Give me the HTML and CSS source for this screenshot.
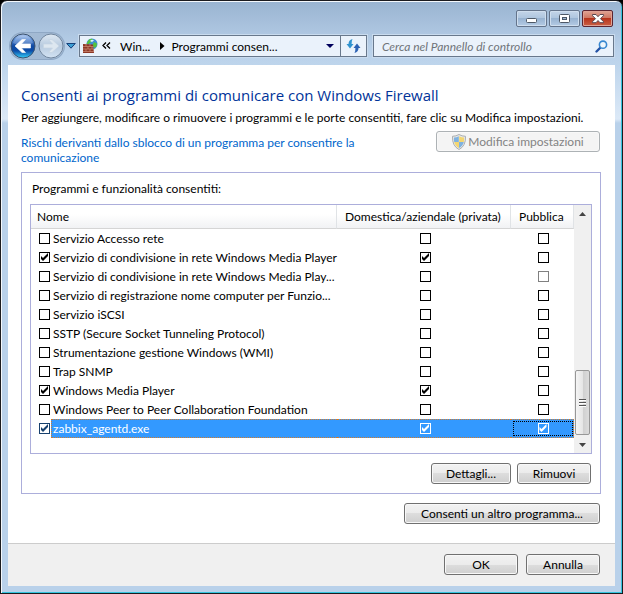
FILE: index.html
```html
<!DOCTYPE html>
<html lang="it">
<head>
<meta charset="utf-8">
<title>Programmi consentiti</title>
<link rel="stylesheet" href="styles.css">
</head>
<body>
<div class="window">
  <header class="titlebar">
    <button class="caption-btn" type="button" aria-label="Riduci a icona">
      <svg width="29" height="15" viewBox="0 0 29 15"><rect x="9.5" y="7.5" width="10" height="4" rx="1" fill="#fff" stroke="#4d5866"/></svg>
    </button>
    <button class="caption-btn" type="button" aria-label="Ingrandisci">
      <svg width="29" height="15" viewBox="0 0 29 15"><rect x="9.500" y="3.500" width="10" height="8" rx="1" fill="#fff" stroke="#4d5866"/><rect x="12.500" y="6.500" width="4" height="2" fill="#9fb8d3" stroke="#4d5866"/></svg>
    </button>
    <button class="caption-btn close" type="button" aria-label="Chiudi">
      <svg width="29" height="15" viewBox="0 0 29 15"><path d="M9.500 3.500h3.500l2 2.200 2-2.200h3.500v1.200l-3 3 3 3v1h-3.500l-2-2.200-2 2.200H9.500v-1l3-3-3-3z" fill="#fff" stroke="#58474f"/></svg>
    </button>
  </header>
  <nav class="navbar">
    <div class="history">
      <button class="plain" type="button" aria-label="Indietro">
        <svg width="26" height="26" viewBox="0 0 26 26">
          <defs>
            <linearGradient id="back" x1="0" y1="0" x2="0" y2="1"><stop offset="0" stop-color="#b5cdf0"/><stop offset=".25" stop-color="#4d82cf"/><stop offset=".5" stop-color="#124aa2"/><stop offset=".7" stop-color="#0b4ca8"/><stop offset="1" stop-color="#35d0fa"/></linearGradient>
            <linearGradient id="forward" x1="0" y1="0" x2="0" y2="1"><stop offset="0" stop-color="#dfe9f3"/><stop offset=".5" stop-color="#b7cadf"/><stop offset="1" stop-color="#d3e3f3"/></linearGradient>
          </defs>
          <circle cx="13" cy="13" r="12" fill="url(#back)" stroke="#3b526f"/>
          <path d="M3 10a10.500 10.500 0 0 1 20 0q-10 5-20 0z" fill="#fff" opacity=".22"/>
          <path d="M5 13l7-6.500h3.500L11.500 11H20.500v4H11.500l4 4.500H12z" fill="#fff" stroke="#fff" stroke-width=".6" stroke-linejoin="round"/>
        </svg>
      </button>
      <button class="plain" type="button" aria-label="Avanti">
        <svg width="26" height="26" viewBox="0 0 26 26">
          <circle cx="13" cy="13" r="12" fill="url(#forward)" stroke="#71869e"/>
          <path d="M21 13l-7-6.500h-3.500L14.500 11H5.500v4h9l-4 4.500H14z" fill="#dde7f0" stroke="#c5d4e3" stroke-width=".7"/>
        </svg>
      </button>
    </div>
    <button class="plain recent" type="button" aria-label="Pagine recenti">
      <svg width="10" height="6" viewBox="0 0 10 6"><path d="M.7.500h8.600L5 5.200z" fill="#3c9fd5" stroke="#17417a"/></svg>
    </button>
    <div class="address">
      <svg class="wall" width="16" height="16" viewBox="0 0 16 16">
        <circle cx="10" cy="6" r="5.500" fill="#3f8fd6"/>
        <path d="M7 1.500q3-1.500 4 .5l-2 2-3 2.500-1.500-1zM12 4l3 1.500-.5 3L12 10l-1.500-2.500z" fill="#55c33f"/>
        <path d="M8 3q2-2 4-.5l-2 1.500z" fill="#d9f3ff"/>
        <path d="M1 6l10 .5 1 8.500H1z" fill="#8e3826"/>
        <path d="M1 8.500h10.500M1 11h11M1 13.500h11M4 6v2.500M8 6v2.500M6 8.500V11M10 8.500V11M4 11v2.500M8 11v2.500" stroke="#cf8d77" stroke-width=".7"/>
      </svg>
      <svg class="chev" width="9" height="8" viewBox="0 0 9 8"><path d="M4 .5L1 3.500l3 3M8 .5L5 3.500l3 3" fill="none" stroke="#000" stroke-width="1.300"/></svg>
      <a class="crumb first" href="#">Win...</a>
      <svg width="5" height="8" viewBox="0 0 5 8"><path d="M0 0l4.500 4L0 8z"/></svg>
      <a class="crumb" href="#">Programmi consen...</a>
      <button class="plain drop" type="button" aria-label="Percorsi precedenti">
        <svg width="8" height="4" viewBox="0 0 8 4"><path d="M0 0h8L4 4z" fill="#00005c"/></svg>
      </button>
      <button class="plain refresh" type="button" aria-label="Aggiorna">
        <svg width="15" height="14" viewBox="0 0 15 14"><path d="M6.500 0Q2.500 1 2.500 5H.5L4 9.500 7.500 5H5.600Q5.500 2 6.500 0z" fill="#2f93cf"/><path d="M8.500 14Q12.500 13 12.500 9h2L11 4.500 7.500 9h1.900Q9.500 12 8.500 14z" fill="#2c62b4"/></svg>
      </button>
    </div>
    <div class="search">
      <input type="text" aria-label="Cerca" placeholder="Cerca nel Pannello di controllo">
      <svg width="13" height="13" viewBox="0 0 13 13"><path d="M5 8L1.500 11.500" stroke="#2453a5" stroke-width="2.400" stroke-linecap="round"/><circle cx="8" cy="4.700" r="3.600" fill="#eef6fc" stroke="#3787d0" stroke-width="1.600"/></svg>
    </div>
  </nav>
  <main class="content">
    <h1>Consenti ai programmi di comunicare con Windows Firewall</h1>
    <p class="intro">Per aggiungere, modificare o rimuovere i programmi e le porte consentiti, fare clic su Modifica impostazioni.</p>
    <div class="risk-row">
      <a class="risk" href="#">Rischi derivanti dallo sblocco di un programma per consentire la comunicazione</a>
      <button class="btn modify" type="button" disabled>
        <svg width="14" height="16" viewBox="0 0 14 16"><path d="M7 .5q3 1.800 6.500 1.800Q14 12 7 15.500 0 12 .5 2.300 4 2.300 7 .5z" fill="#e9e9e7" stroke="#a9adb0"/><path d="M6.800 2.200V8H2.200Q1.800 5.500 2 3.600q2.500 0 4.800-1.400zM7 8h4.800Q10.800 12 7 14z" fill="#7fb2e0"/><path d="M7.200 2.200V8h4.600q.4-2.500.2-4.400-2.500 0-4.800-1.400zM7 8H2.200Q3.200 12 7 14z" fill="#f3d671"/></svg>
        Modifica impostazioni
      </button>
    </div>
    <section class="panel">
      <h2>Programmi e funzionalità consentiti:</h2>
      <div class="list">
        <table>
          <colgroup><col><col class="col-private"><col class="col-public"></colgroup>
          <thead><tr><th>Nome</th><th>Domestica/aziendale (privata)</th><th>Pubblica</th></tr></thead>
          <tbody>
            <tr><td><div class="name"><input type="checkbox" id="p1"><label for="p1">Servizio Accesso rete</label></div></td><td><input type="checkbox" aria-label="Privata"></td><td><input type="checkbox" aria-label="Pubblica"></td></tr>
            <tr><td><div class="name"><input type="checkbox" id="p2" checked><label for="p2">Servizio di condivisione in rete Windows Media Player</label></div></td><td><input type="checkbox" aria-label="Privata" checked></td><td><input type="checkbox" aria-label="Pubblica"></td></tr>
            <tr><td><div class="name"><input type="checkbox" id="p3"><label for="p3">Servizio di condivisione in rete Windows Media Play...</label></div></td><td><input type="checkbox" aria-label="Privata"></td><td><input type="checkbox" aria-label="Pubblica" disabled></td></tr>
            <tr><td><div class="name"><input type="checkbox" id="p4"><label for="p4">Servizio di registrazione nome computer per Funzio...</label></div></td><td><input type="checkbox" aria-label="Privata"></td><td><input type="checkbox" aria-label="Pubblica"></td></tr>
            <tr><td><div class="name"><input type="checkbox" id="p5"><label for="p5">Servizio iSCSI</label></div></td><td><input type="checkbox" aria-label="Privata"></td><td><input type="checkbox" aria-label="Pubblica"></td></tr>
            <tr><td><div class="name"><input type="checkbox" id="p6"><label for="p6">SSTP (Secure Socket Tunneling Protocol)</label></div></td><td><input type="checkbox" aria-label="Privata"></td><td><input type="checkbox" aria-label="Pubblica"></td></tr>
            <tr><td><div class="name"><input type="checkbox" id="p7"><label for="p7">Strumentazione gestione Windows (WMI)</label></div></td><td><input type="checkbox" aria-label="Privata"></td><td><input type="checkbox" aria-label="Pubblica"></td></tr>
            <tr><td><div class="name"><input type="checkbox" id="p8"><label for="p8">Trap SNMP</label></div></td><td><input type="checkbox" aria-label="Privata"></td><td><input type="checkbox" aria-label="Pubblica"></td></tr>
            <tr><td><div class="name"><input type="checkbox" id="p9" checked><label for="p9">Windows Media Player</label></div></td><td><input type="checkbox" aria-label="Privata" checked></td><td><input type="checkbox" aria-label="Pubblica"></td></tr>
            <tr><td><div class="name"><input type="checkbox" id="p10"><label for="p10">Windows Peer to Peer Collaboration Foundation</label></div></td><td><input type="checkbox" aria-label="Privata"></td><td><input type="checkbox" aria-label="Pubblica"></td></tr>
            <tr class="selected"><td><div class="name"><input type="checkbox" id="p11" checked><label for="p11">zabbix_agentd.exe</label></div></td><td><input type="checkbox" aria-label="Privata" checked></td><td><div class="focus"><input type="checkbox" aria-label="Pubblica" checked></div></td></tr>
          </tbody>
        </table>
        <div class="scrollbar">
          <button class="plain arrow" type="button" aria-label="Scorri su"><svg width="7" height="4" viewBox="0 0 7 4"><path d="M0 4h7L3.500 0z" fill="#444"/></svg></button>
          <div class="track"><div class="thumb"><svg width="7" height="8" viewBox="0 0 7 8"><path d="M0 .5h7M0 3.500h7M0 6.500h7" stroke="#555"/><path d="M0 1.500h7M0 4.500h7M0 7.500h7" stroke="#fff"/></svg></div></div>
          <button class="plain arrow" type="button" aria-label="Scorri giù"><svg width="7" height="4" viewBox="0 0 7 4"><path d="M0 0h7L3.500 4z" fill="#444"/></svg></button>
        </div>
      </div>
      <div class="actions">
        <button class="btn details" type="button">Dettagli...</button>
        <button class="btn" type="button">Rimuovi</button>
      </div>
    </section>
    <div class="other"><button class="btn allow" type="button">Consenti un altro programma...</button></div>
    <footer class="footer">
      <button class="btn" type="button">OK</button>
      <button class="btn" type="button">Annulla</button>
    </footer>
  </main>
</div>
</body>
</html>
```
FILE: styles.css
```css
* { box-sizing: border-box; }

body {
  margin: 0;
  background: #000;
  color: #000;
  font: 12px/15px Lato, "Open Sans", sans-serif;
}

button, input { font: inherit; margin: 0; }
svg { display: block; flex: none; }
a { color: inherit; text-decoration: none; }

.window {
  display: flex;
  flex-direction: column;
  min-height: 100vh;
  padding: 0 6px 7px;
  border: 1px solid #1b1b1f;
  border-radius: 7px 7px 0 0;
  box-shadow: inset 1px 1px #f4f8fc, inset -1px -1px #35c4de;
  background: linear-gradient(#99b4d1, #a6bfdb 20px, #b9d1ea 50px, #bed5ec 64px, #dce9f7 118px, #b9d1ea 122px);
}

.titlebar {
  display: flex;
  justify-content: flex-end;
  gap: 2px;
  padding: 9px 3px 0 0;
}

.caption-btn {
  width: 31px;
  height: 17px;
  padding: 0;
  border: 1px solid #64748b;
  border-radius: 2px;
  background: linear-gradient(#c4d5e8, #afc6df 45%, #98b3d1 50%, #b4cbe4);
  box-shadow: inset 0 0 0 1px #cfdeee;
}
.close {
  border-color: #5c2531;
  background: linear-gradient(#e1a494, #cf7864 45%, #b7341c 50%, #cb6044);
  box-shadow: inset 0 0 0 1px #dfa294;
}

.navbar {
  display: flex;
  align-items: center;
  height: 38px;
  padding: 0 2px 0 3px;
}
.plain {
  display: flex;
  align-items: center;
  justify-content: center;
  padding: 0;
  border: 0;
  background: none;
}
.history {
  display: flex;
  gap: 2px;
  border-radius: 14px;
  background: #a3bad4;
  box-shadow: 0 0 0 1px #8fa8c5;
}
.recent { width: 14px; height: 20px; }

.address, .search {
  display: flex;
  align-items: center;
  height: 22px;
  border: 1px solid #68788c;
  background: #eaf2fb;
  box-shadow: 0 0 0 1px #c9dbee;
}
.address { flex: 284 1 0; margin-left: 1px; padding-left: 2px; }
.chev { margin-left: 4px; }
.crumb { margin: 0 9px 0 6px; white-space: nowrap; }
.crumb.first { margin: 0 10px 0 9px; }
.drop { width: 20px; height: 20px; margin-left: auto; }
.refresh { width: 26px; height: 20px; border-left: 1px solid #68788c; }
.search { flex: 226 1 0; margin-left: 6px; padding: 0 5px 0 8px; }
.search input {
  flex: 1;
  min-width: 0;
  padding: 0;
  border: 0;
  outline: 0;
  background: none;
  font-style: italic;
}
.search input::placeholder { color: #6f7479; opacity: 1; }

.content {
  flex: 1;
  display: flex;
  flex-direction: column;
  margin: 0 1px;
  background: #fff;
}
h1 {
  margin: 19px 13px 0;
  color: #003399;
  font: 15px/22px "Open Sans", sans-serif;
  white-space: nowrap;
}
.intro { margin: 4px 13px 0; white-space: nowrap; }
.risk-row {
  display: flex;
  justify-content: space-between;
  margin: 6px 15px 0 13px;
}
.risk { width: 360px; padding-top: 4px; color: #0066cc; }

.btn {
  display: flex;
  align-items: center;
  justify-content: center;
  gap: 2px;
  width: 74px;
  height: 21px;
  padding: 0;
  border: 1px solid #707070;
  border-radius: 3px;
  background: linear-gradient(#f2f2f2, #ebebeb 50%, #dddddd 50%, #cfcfcf);
  box-shadow: inset 0 0 0 1px #f8f8f8;
  color: #000;
  white-space: nowrap;
}
.modify {
  width: 164px;
  border-color: #adb2b5;
  background: #f4f4f4;
  color: #838383;
}
.details { width: 80px; }
.allow { width: 196px; }

.panel {
  margin: 7px 14px 0 13px;
  padding: 8px 8px 9px;
  border: 1px solid #acaedb;
}
h2 {
  margin: 0 2px 8px;
  font-size: 12px;
  line-height: 15px;
  font-weight: 400;
}
.list {
  display: flex;
  height: 250px;
  border: 1px solid #acaedb;
}
table {
  flex: 1;
  width: 100%;
  min-width: 0;
  height: min-content;
  table-layout: fixed;
  border-collapse: separate;
  border-spacing: 0;
}
.col-private { width: 174px; }
.col-public { width: 63px; }
th {
  height: 24px;
  padding: 0 0 0 8px;
  border-right: 1px solid #e0e3e6;
  border-bottom: 1px solid #d5d5d5;
  background: linear-gradient(#fff 40%, #f1f2f4);
  font-weight: 400;
  text-align: left;
  white-space: nowrap;
}
th:first-child { padding-left: 6px; }
td { height: 19px; padding: 0 0 0 3px; text-align: center; vertical-align: middle; }
td:first-child { padding: 0 0 0 8px; }
td:last-child { padding: 0 1px 0 2px; }
.name { display: flex; align-items: center; height: 19px; }
.name label {
  flex: 1;
  height: 19px;
  margin-left: 1px;
  padding: 1px 0 0 1px;
  border: 1px solid transparent;
  border-right: 0;
  text-align: left;
  white-space: nowrap;
}

input[type="checkbox"] {
  appearance: none;
  display: block;
  flex: none;
  width: 11px;
  height: 11px;
  margin: 0 auto;
  border: 1px solid #000;
  background: #fff;
}
.name input[type="checkbox"] { margin: 0; }
input[type="checkbox"]:disabled { border-color: #808080; }
input[type="checkbox"]:checked::before {
  content: "";
  display: block;
  width: 9px;
  height: 9px;
  background: currentColor;
  clip-path: polygon(1px 3px, 3px 5px, 8px 0, 8px 3px, 3px 8px, 1px 6px);
}

.selected .name input { border-color: #17406d; color: #17406d; }
.selected .name label { border-color: #d27b2c; border-style: dotted; border-right: 0; background: #3399ff; color: #fff; }
.selected td:not(:first-child) {
  border: 0 dotted #d27b2c;
  border-width: 1px 0;
  background: #3399ff;
}
.selected td:last-child:last-child { border-right-width: 1px; padding-right: 0; }
.selected td:not(:first-child) input { border-color: #fff; background: transparent; color: #fff; }
.focus { padding: 1px 0; border: 1px dotted #000; }

.scrollbar {
  display: flex;
  flex: none;
  flex-direction: column;
  width: 17px;
  background: #f0f0f0;
}
.arrow { height: 17px; }
.track { flex: 1; display: flex; align-items: flex-end; padding: 0 1px 1px; }
.thumb {
  display: flex;
  align-items: center;
  justify-content: center;
  width: 15px;
  height: 65px;
  border: 1px solid #979797;
  border-radius: 2px;
  background: linear-gradient(90deg, #f5f5f5, #e6e6e6 50%, #cfcfcf 50%, #dcdcdc);
}

.actions { display: flex; justify-content: flex-end; gap: 6px; padding: 9px 1px 0 0; }
.other { display: flex; justify-content: flex-end; margin: 9px 15px 19px 0; }
.footer {
  flex: 1;
  display: flex;
  align-items: center;
  justify-content: flex-end;
  gap: 8px;
  padding: 0 15px 2px 0;
  border-top: 1px solid #ccc;
  background: #f0f0f0;
}
```
